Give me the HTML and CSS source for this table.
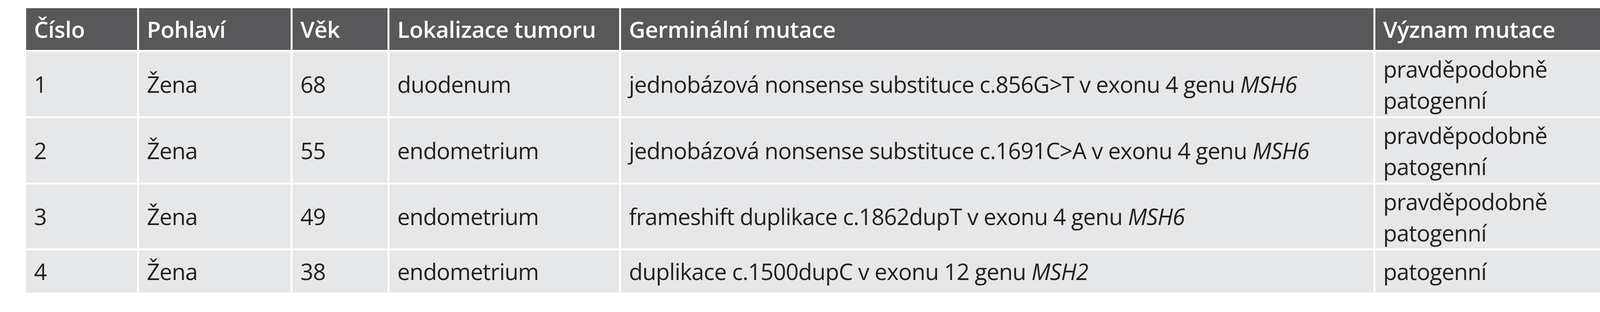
FILE: index.html
```html
<!DOCTYPE html>
<html lang="cs">
<head>
<meta charset="utf-8">
<title>Tabulka mutací</title>
<link rel="stylesheet" href="styles.css">
</head>
<body>
<div class="mut" role="table">
  <div class="cell head" role="columnheader"><span>Číslo</span></div>
  <div class="cell head" role="columnheader"><span>Pohlaví</span></div>
  <div class="cell head" role="columnheader"><span>Věk</span></div>
  <div class="cell head" role="columnheader"><span>Lokalizace tumoru</span></div>
  <div class="cell head" role="columnheader"><span>Germinální mutace</span></div>
  <div class="cell head" role="columnheader"><span>Význam mutace</span></div>

  <div class="cell" role="cell"><span>1</span></div>
  <div class="cell" role="cell"><span>Žena</span></div>
  <div class="cell" role="cell"><span>68</span></div>
  <div class="cell" role="cell"><span>duodenum</span></div>
  <div class="cell" role="cell"><span>jednobázová nonsense substituce c.856G&gt;T v exonu 4 genu <i>MSH6</i></span></div>
  <div class="cell two" role="cell">pravděpodobně<br>patogenní</div>

  <div class="cell" role="cell"><span>2</span></div>
  <div class="cell" role="cell"><span>Žena</span></div>
  <div class="cell" role="cell"><span>55</span></div>
  <div class="cell" role="cell"><span>endometrium</span></div>
  <div class="cell" role="cell"><span>jednobázová nonsense substituce c.1691C&gt;A v exonu 4 genu <i>MSH6</i></span></div>
  <div class="cell two" role="cell">pravděpodobně<br>patogenní</div>

  <div class="cell" role="cell"><span>3</span></div>
  <div class="cell" role="cell"><span>Žena</span></div>
  <div class="cell" role="cell"><span>49</span></div>
  <div class="cell" role="cell"><span>endometrium</span></div>
  <div class="cell" role="cell"><span>frameshift duplikace c.1862dupT v exonu 4 genu <i>MSH6</i></span></div>
  <div class="cell two" role="cell">pravděpodobně<br>patogenní</div>

  <div class="cell" role="cell"><span>4</span></div>
  <div class="cell" role="cell"><span>Žena</span></div>
  <div class="cell" role="cell"><span>38</span></div>
  <div class="cell" role="cell"><span>endometrium</span></div>
  <div class="cell" role="cell"><span>duplikace c.1500dupC v exonu 12 genu <i>MSH2</i></span></div>
  <div class="cell" role="cell"><span>patogenní</span></div>
</div>
</body>
</html>
```
FILE: styles.css
```css
html, body {
  margin: 0;
  padding: 0;
  background: #ffffff;
}

body {
  padding: 21px 0 0 67px;
}

.mut {
  display: grid;
  grid-template-columns: 284px 388px 243px 588px 1926px 670px;
  grid-template-rows: 107px 165px 165px 164px 108px;
  gap: 5px;
  width: max-content;
  font-family: "Open Sans", "Liberation Sans", sans-serif;
  font-stretch: 90%;
}

.cell {
  box-sizing: border-box;
  display: flex;
  align-items: center;
  padding: 0 0 0 20px;
  overflow: hidden;
  white-space: nowrap;
  background: #e6e7e9;
  color: #231f20;
  font-size: 58px;
  font-weight: 400;
  line-height: 64px;
  letter-spacing: -1px;
}

.cell i {
  font-style: italic;
}

.head {
  background: #58585a;
  color: #ffffff;
  font-weight: 600;
  letter-spacing: -0.5px;
}

.two {
  display: block;
  padding-top: 4px;
  line-height: 80px;
  white-space: normal;
}
```
